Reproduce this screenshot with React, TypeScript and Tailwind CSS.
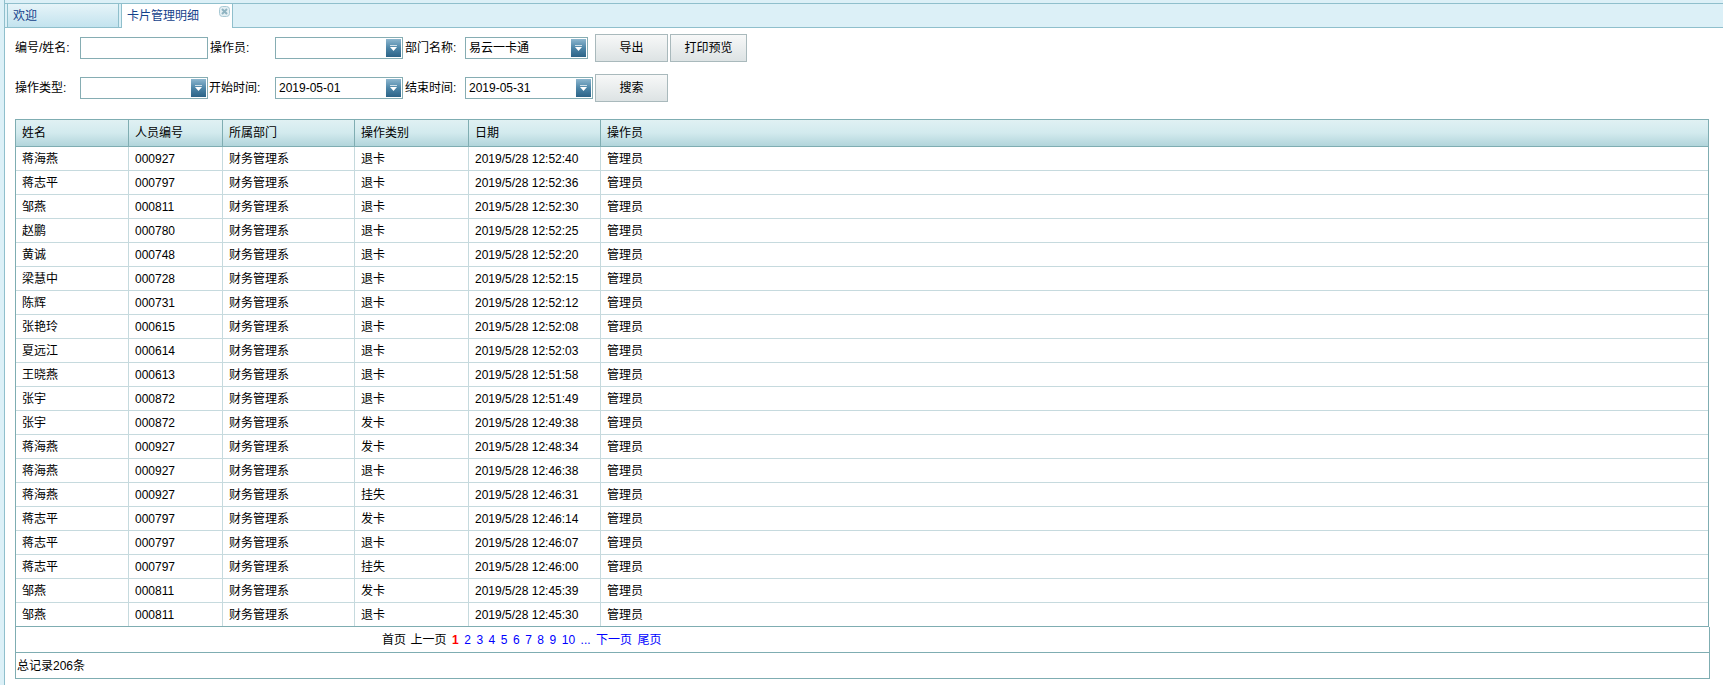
import React from 'react';

const ROWS = [
  ['蒋海燕', '000927', '退卡', '12:52:40'],
  ['蒋志平', '000797', '退卡', '12:52:36'],
  ['邹燕', '000811', '退卡', '12:52:30'],
  ['赵鹏', '000780', '退卡', '12:52:25'],
  ['黄诚', '000748', '退卡', '12:52:20'],
  ['梁慧中', '000728', '退卡', '12:52:15'],
  ['陈辉', '000731', '退卡', '12:52:12'],
  ['张艳玲', '000615', '退卡', '12:52:08'],
  ['夏远江', '000614', '退卡', '12:52:03'],
  ['王晓燕', '000613', '退卡', '12:51:58'],
  ['张宇', '000872', '退卡', '12:51:49'],
  ['张宇', '000872', '发卡', '12:49:38'],
  ['蒋海燕', '000927', '发卡', '12:48:34'],
  ['蒋海燕', '000927', '退卡', '12:46:38'],
  ['蒋海燕', '000927', '挂失', '12:46:31'],
  ['蒋志平', '000797', '发卡', '12:46:14'],
  ['蒋志平', '000797', '退卡', '12:46:07'],
  ['蒋志平', '000797', '挂失', '12:46:00'],
  ['邹燕', '000811', '发卡', '12:45:39'],
  ['邹燕', '000811', '退卡', '12:45:30'],
];

const COLS = ['w-[113px]', 'w-[94px]', 'w-[132px]', 'w-[114px]', 'w-[132px]'];

function Label({ text, w }: { text: string; w: string }) {
  return <span className={`${w} shrink-0 whitespace-nowrap`}>{text}</span>;
}

function Input({ w }: { w: string }) {
  return <div className={`${w} h-[22px] shrink-0 border border-[#86adb3] bg-white`} />;
}

function Select({ w, value }: { w: string; value?: string }) {
  return (
    <div className={`${w} h-[22px] shrink-0 flex items-center border border-[#86adb3] bg-white pr-px`}>
      <span className="flex-1 pl-[3px] text-[12px] whitespace-nowrap overflow-hidden">{value}</span>
      <span className="w-[15px] h-[18px] flex flex-col items-center justify-center gap-px bg-linear-to-b from-[#8db7cf] via-[#4d86a8] to-[#2c6488]">
        <span className="w-[7px] h-px bg-white/70" />
        <svg width="7" height="4" viewBox="0 0 7 4">
          <path d="M0 0 H7 L3.5 4 Z" fill="#ffffff" />
        </svg>
      </span>
    </div>
  );
}

function Button({ text, w }: { text: string; w: string }) {
  return (
    <div className={`${w} h-[28px] shrink-0 flex items-center justify-center border border-[#a9b9bc] bg-linear-to-b from-[#f7f8f8] to-[#dde3e4] text-[12px]`}>
      {text}
    </div>
  );
}

export default function App() {
  return (
    <div className="h-[685px] w-full flex bg-[#dcf0f7] pl-[4px] text-[12px] text-black font-['Liberation_Sans','Noto_Sans_CJK_SC',sans-serif] overflow-hidden">
      <div className="flex-1 flex flex-col border-l border-[#8fbfcc]">
        {/* tabs */}
        <div className="mt-[3px] h-[25px] flex items-end border-t border-b border-[#8fbfcc] pl-[2px]">
          <div className="w-[112px] h-[23px] flex items-center pl-[5px] border-l border-r border-[#8fbfcc] bg-linear-to-b from-[#e6f4f9] to-[#c3e3ee] text-[#15428b]">
            欢迎
          </div>
          <div className="relative ml-[2px] w-[112px] h-[24px] -mb-px flex items-center pl-[5px] pb-px border-l border-r border-[#8fbfcc] bg-white text-[#15428b]">
            卡片管理明细
            <svg className="absolute right-[2px] top-[2px]" width="11" height="11" viewBox="0 0 11 11">
              <rect x="0.5" y="0.5" width="10" height="10" rx="3" fill="#e4eff3" stroke="#a8c9d4" />
              <path d="M3 3 L8 8 M8 3 L3 8" stroke="#8fb3c1" strokeWidth="2" />
            </svg>
          </div>
        </div>

        {/* content */}
        <div className="flex-1 bg-white pl-[10px] pt-[6px]">
          <div className="h-[28px] flex items-center">
            <Label text="编号/姓名:" w="w-[65px]" />
            <Input w="w-[128px]" />
            <span className="ml-[2px]" />
            <Label text="操作员:" w="w-[65px]" />
            <Select w="w-[128px]" />
            <span className="ml-[2px]" />
            <Label text="部门名称:" w="w-[60px]" />
            <Select w="w-[123px]" value="易云一卡通" />
            <span className="ml-[7px]" />
            <Button text="导出" w="w-[73px]" />
            <span className="ml-[2px]" />
            <Button text="打印预览" w="w-[77px]" />
          </div>
          <div className="mt-[12px] h-[28px] flex items-center">
            <Label text="操作类型:" w="w-[65px]" />
            <Select w="w-[128px]" />
            <span className="ml-[1px]" />
            <Label text="开始时间:" w="w-[66px]" />
            <Select w="w-[128px]" value="2019-05-01" />
            <span className="ml-[2px]" />
            <Label text="结束时间:" w="w-[60px]" />
            <Select w="w-[128px]" value="2019-05-31" />
            <span className="ml-[2px]" />
            <Button text="搜索" w="w-[73px]" />
          </div>

          {/* table */}
          <div className="mt-[17px] w-[1695px]">
            <div className="w-[1694px] border-l border-t border-r border-[#7fadb2]">
              <div className="h-[27px] flex border-b border-[#7fadb2] bg-linear-to-b from-[#e0f1f3] via-[#d2eaee] to-[#b2d5db]">
                {['姓名', '人员编号', '所属部门', '操作类别', '日期'].map((h, i) => (
                  <div key={h} className={`${COLS[i]} shrink-0 flex items-center pl-[6px] border-r border-[#7fadb2]`}>
                    {h}
                  </div>
                ))}
                <div className="flex-1 flex items-center pl-[6px]">操作员</div>
              </div>
              {ROWS.map((r, idx) => (
                <div
                  key={idx}
                  className={`h-[24px] flex border-b ${idx === ROWS.length - 1 ? 'border-[#7fadb2]' : 'border-[#c6dade]'}`}
                >
                  <div className={`${COLS[0]} shrink-0 flex items-center pl-[6px] border-r border-[#c6dade]`}>{r[0]}</div>
                  <div className={`${COLS[1]} shrink-0 flex items-center pl-[6px] border-r border-[#c6dade]`}>{r[1]}</div>
                  <div className={`${COLS[2]} shrink-0 flex items-center pl-[6px] border-r border-[#c6dade]`}>财务管理系</div>
                  <div className={`${COLS[3]} shrink-0 flex items-center pl-[6px] border-r border-[#c6dade]`}>{r[2]}</div>
                  <div className={`${COLS[4]} shrink-0 flex items-center pl-[6px] border-r border-[#c6dade]`}>2019/5/28 {r[3]}</div>
                  <div className="flex-1 flex items-center pl-[6px]">管理员</div>
                </div>
              ))}
            </div>
            <div className="h-[26px] flex items-center gap-[5.5px] pl-[366px] border-l border-r border-b border-[#7fadb2]">
              <span className="mr-[-1px]">首页</span>
              <span>上一页</span>
              <span className="text-[#ff0000] font-bold">1</span>
              {['2', '3', '4', '5', '6', '7', '8', '9', '10', '...', '下一页', '尾页'].map((p) => (
                <span key={p} className="text-[#0000ff]">
                  {p}
                </span>
              ))}
            </div>
            <div className="h-[26px] flex items-center pl-px border-l border-r border-b border-[#7fadb2]">总记录206条</div>
          </div>
        </div>
      </div>
    </div>
  );
}
